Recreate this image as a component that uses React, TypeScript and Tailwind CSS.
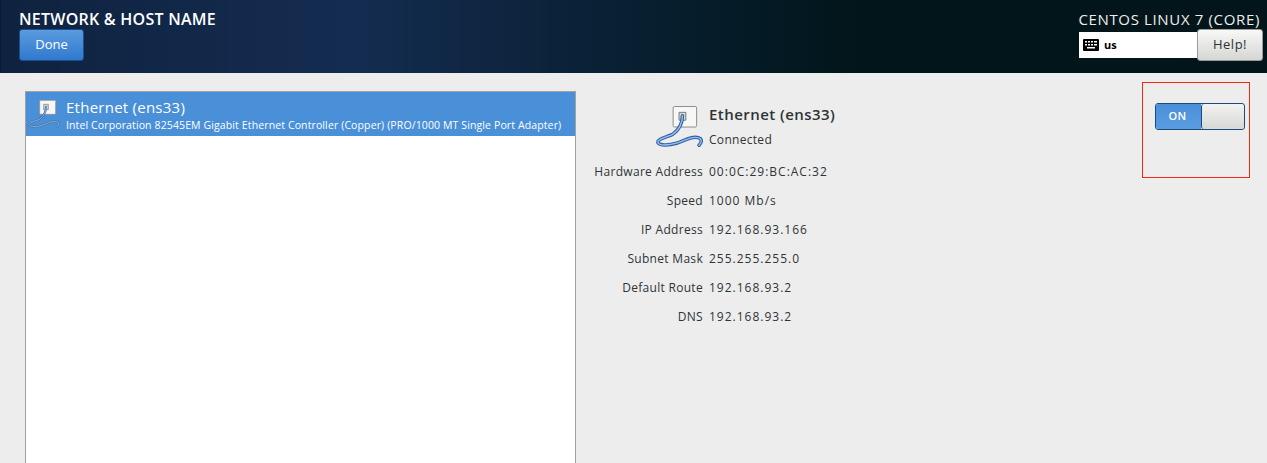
const FONT = "font-['Open_Sans','Noto_Sans',sans-serif]";

const DETAILS = [
  ['Hardware Address', '00:0C:29:BC:AC:32'],
  ['Speed', '1000 Mb/s'],
  ['IP Address', '192.168.93.166'],
  ['Subnet Mask', '255.255.255.0'],
  ['Default Route', '192.168.93.2'],
  ['DNS', '192.168.93.2'],
];

const CABLE = 'M27 10 C27 18 24 24 17 29 C10 32 1 34 2 37.5 C4 41 14 40 21 38 C28 36 34 32 40 32 C45 32 47 34 46 37 C45.5 38 45 39 44 40';

function WiredIcon({ width, light }: { width: number; light?: boolean }) {
  return (
    <svg width={width} height={(width * 42) / 48} viewBox="0 0 48 42" className="shrink-0">
      <rect x="17.5" y="0.5" width="24" height="21" rx="1.5" fill="#f7f7f5" stroke="#8a8a88" />
      <path d="M23.5 6.5 h7 v8 h-7 z" fill="#d8d8d6" stroke="#77787a" />
      <path d={CABLE} fill="none" stroke={light ? '#3d6da6' : '#2f63a8'} strokeWidth={light ? 3 : 3.6} strokeLinecap="round" />
      <path d={CABLE} fill="none" stroke={light ? '#93b6de' : '#9cc0ea'} strokeWidth="1.4" strokeLinecap="round" />
    </svg>
  );
}

function KeyboardIcon() {
  return (
    <svg width="16" height="12" viewBox="0 0 16 12">
      <rect width="16" height="12" rx="1" fill="#000" />
      <g fill="#fff">
        <rect x="2" y="2" width="2" height="1.5" />
        <rect x="5" y="2" width="2" height="1.5" />
        <rect x="8" y="2" width="2" height="1.5" />
        <rect x="11" y="2" width="3" height="1.5" />
        <rect x="2" y="5" width="2" height="1.5" />
        <rect x="5" y="5" width="2" height="1.5" />
        <rect x="8" y="5" width="2" height="1.5" />
        <rect x="11" y="5" width="3" height="1.5" />
        <rect x="4" y="8" width="8" height="1.5" />
      </g>
    </svg>
  );
}

export default function App() {
  return (
    <div className={`${FONT} w-[1267px] h-[463px] overflow-hidden bg-[#ededed] text-[#2e3436]`}>
      {/* top bar */}
      <header className="h-[73px] flex justify-between bg-gradient-to-r from-[#0f2340] via-[#142c50] via-[28%] to-[#02151a] to-[68%] border-l border-[#0a1a30]">
        <div className="pl-[18px] pt-[10px]">
          <h1 className="text-[16px] leading-[18px] font-semibold text-white tracking-[0.25px] whitespace-nowrap">NETWORK &amp; HOST NAME</h1>
          <button className="mt-[1px] w-[65px] h-[32px] rounded-[3px] border border-[#1c4f8c] bg-gradient-to-b from-[#5a9be0] to-[#2f79ce] text-[13px] text-white">
            Done
          </button>
        </div>
        <div className="w-[188px] pt-[10px] pr-[4px] flex flex-col items-end">
          <div className="text-[15px] leading-[18px] text-[#eeeeec] tracking-[0.65px] pr-[3px] whitespace-nowrap">CENTOS LINUX 7 (CORE)</div>
          <div className="mt-[1px] flex items-center">
            <div className="w-[118px] h-[26px] bg-white flex items-center gap-[5px] pl-[4px] text-[11px] font-bold text-black">
              <KeyboardIcon />
              us
            </div>
            <button className="w-[66px] h-[32px] rounded-[3px] border border-[#9a9a98] bg-gradient-to-b from-[#f8f8f7] to-[#d6d6d4] text-[13px] tracking-[0.5px] text-[#2e3436]">
              Help!
            </button>
          </div>
        </div>
      </header>

      <main className="flex">
        {/* device list */}
        <section className="ml-[25px] mt-[18px] w-[551px] h-[380px] bg-white border border-[#a1a1a1]">
          <div className="h-[44px] bg-[#4a90d9] text-white flex items-start pl-[2px]">
            <div className="mt-[8px] mr-[6px]">
              <WiredIcon width={32} light />
            </div>
            <div className="mt-[6px]">
              <div className="text-[15px] leading-[18px] tracking-[0.25px]">Ethernet (ens33)</div>
              <div className="text-[10.5px] leading-[14px] mt-[2px] tracking-[0.12px] whitespace-nowrap">
                Intel Corporation 82545EM Gigabit Ethernet Controller (Copper) (PRO/1000 MT Single Port Adapter)
              </div>
            </div>
          </div>
        </section>

        {/* device details */}
        <section className="ml-[18px] mt-[33px] w-[548px]">
          <div className="flex items-start pl-[62px] h-[50px]">
            <WiredIcon width={47} />
            <div className="ml-[6px]">
              <div className="text-[15px] leading-[18px] font-semibold tracking-[0.45px] -mt-[1px]">Ethernet (ens33)</div>
              <div className="text-[12px] leading-[16px] mt-[9px] tracking-[0.3px]">Connected</div>
            </div>
          </div>
          <dl className="mt-[7px] grid grid-cols-[109px_auto] gap-x-[6px] gap-y-[11px] text-[12px] leading-[18px] tracking-[0.3px]">
            {DETAILS.map(([label, value]) => (
              <div key={label} className="contents">
                <dt className="text-right whitespace-nowrap">{label}</dt>
                <dd className="tracking-[1px]">{value}</dd>
              </div>
            ))}
          </dl>
        </section>

        {/* on/off switch, outlined in red */}
        <section className="relative">
          <div className="absolute left-0 top-[9px] w-[108px] h-[96px] border border-[#f02a10] pl-[12px] pt-[20px]">
            <div className="w-[90px] h-[27px] flex rounded-[3px] border border-[#1c4a7e] overflow-hidden">
              <div className="w-[45px] bg-gradient-to-b from-[#4a90d9] to-[#5a9ce0] text-white text-[11px] font-semibold tracking-[0.3px] flex items-center justify-center pr-[2px]">
                ON
              </div>
              <div className="flex-1 rounded-[3px] border-l border-[#1c4a7e] bg-gradient-to-b from-[#f2f2f1] to-[#d8d8d6]" />
            </div>
          </div>
        </section>
      </main>
    </div>
  );
}
